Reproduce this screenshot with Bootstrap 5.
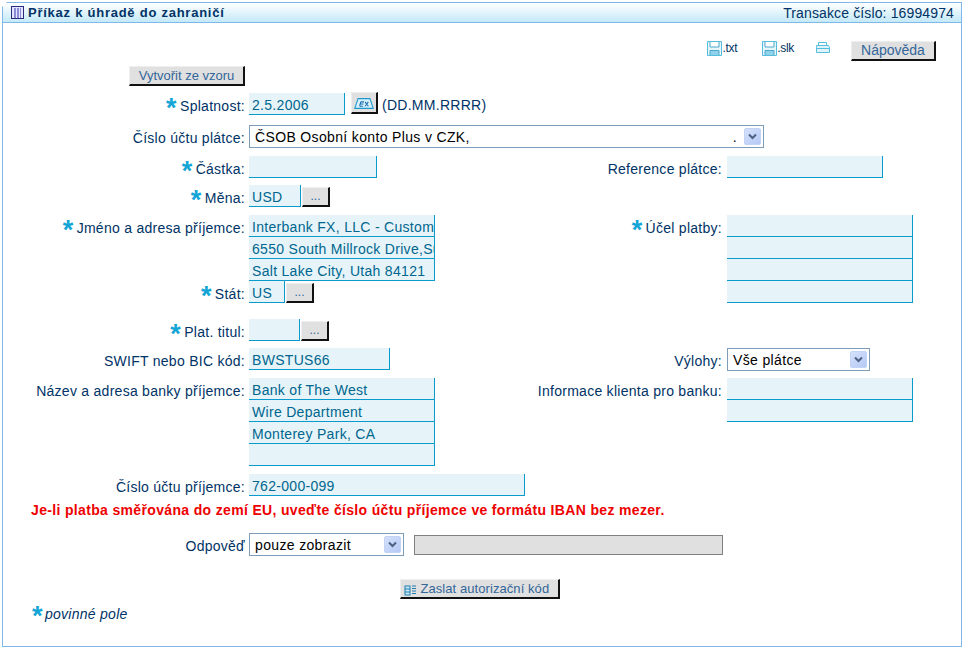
<!DOCTYPE html>
<html lang="cs">
<head>
<meta charset="utf-8">
<title>Příkaz k úhradě do zahraničí</title>
<link href="https://cdn.jsdelivr.net/npm/bootstrap@5.3.0/dist/css/bootstrap.min.css" rel="stylesheet">
<style>
html,body{height:100%;}
body{background:#fff;margin:0;font-family:"Liberation Sans",Arial,sans-serif;font-size:14px;letter-spacing:.27px;color:#003366;overflow:hidden;}
.panel-box{margin:2px 3px 0 2px;height:645px;border:1px solid #80b8ea;clip-path:polygon(5px 0,100% 0,100% 100%,0 100%,0 5px);}
.panel-head{height:20px;border-bottom:1px solid #80b8ea;background:linear-gradient(#ffffff,#c5e9f8);padding:0 7px 0 8px;line-height:18px;}
.panel-title{font-weight:700;font-size:13px;letter-spacing:.75px;color:#003366;}
.panel-num{font-size:14px;letter-spacing:.13px;}
.panel-main{padding-top:18px;}
.ln{display:flex;align-items:flex-start;}
.lab{width:242px;height:22px;flex:none;text-align:right;padding-top:4px;white-space:nowrap;box-sizing:border-box;line-height:19px;}
.fld{margin-left:4px;display:flex;flex:none;align-items:flex-start;}
.lft{width:527px;flex:none;display:flex;flex-direction:column;}
.lab-r{width:192px;height:22px;flex:none;text-align:right;line-height:19px;padding-top:4px;white-space:nowrap;}
.fld-r{margin-left:5px;display:flex;flex-direction:column;}
.star{color:#12a5d6;font-size:27px;font-weight:700;line-height:14px;vertical-align:-6px;font-family:"Liberation Sans",sans-serif;margin-right:-1px;}
input.inp{display:block;height:22px;padding:3px 0 0 3px;border:0;border-right:1px solid #0a9acb;border-bottom:1px solid #0a9acb;border-radius:0;background:#e6f4f9;color:#00668f;font:14px/18px "Liberation Sans",Arial,sans-serif;letter-spacing:.3px;box-shadow:none;}
.btn.gbtn{--bs-btn-padding-x:0;--bs-btn-padding-y:0;--bs-btn-border-radius:0;--bs-btn-bg:#e0e0e0;--bs-btn-hover-bg:#e0e0e0;--bs-btn-color:#336699;--bs-btn-hover-color:#336699;--bs-btn-font-size:14px;--bs-btn-line-height:17px;--bs-btn-border-width:0;background:#e0e0e0;color:#336699;border-right:2px solid #111;border-bottom:2px solid #111;border-top:1px solid #eee;border-left:1px solid #eee;height:20px;display:block;text-align:center;font-family:"Liberation Sans",Arial,sans-serif;}
.w-dots{width:28px;font-size:12px;margin-left:1px;margin-top:2px;}
.sel{display:block;height:23px;border:1px solid #7f9db9;border-radius:0;padding:1px 0 0 5px;font:14px/20px "Liberation Sans",Arial,sans-serif;letter-spacing:.35px;color:#000;appearance:none;-webkit-appearance:none;background:#fff url("data:image/svg+xml,%3Csvg xmlns='http://www.w3.org/2000/svg' width='17' height='17'%3E%3Cdefs%3E%3ClinearGradient id='g' x1='0' y1='0' x2='1' y2='1'%3E%3Cstop offset='0' stop-color='%23d6e2fb'/%3E%3Cstop offset='1' stop-color='%23b4c8f5'/%3E%3C/linearGradient%3E%3C/defs%3E%3Crect x='.5' y='.5' width='16' height='16' rx='1.5' fill='url(%23g)' stroke='%23c3d3f5'/%3E%3Cpath d='M5 6.5l3.5 3.5L12 6.5' fill='none' stroke='%234d6185' stroke-width='2'/%3E%3C/svg%3E") no-repeat right 2px center;}
.tools{height:21px;margin-top:0;display:flex;justify-content:flex-end;padding-right:25px;align-items:flex-start;}
.tool-a{display:flex;align-items:center;font-size:12px;color:#003366;text-decoration:none;height:14px;letter-spacing:-.3px;}
.warn{color:#ee0000;font-weight:700;font-size:14px;letter-spacing:.34px;padding-left:28px;line-height:16px;margin-top:6px;}
.note{padding-left:28px;font-style:italic;line-height:18px;margin-top:6px;}
.gray-in{width:309px;height:20px;background:#e0e0e0;border:1px solid #808080;margin:2px 0 0 10px;}
.m7{margin-top:7px}.m8{margin-top:8px}.m10{margin-top:10px}.m16{margin-top:16px}
.w96{width:96px}.w515{width:515px}.w128{width:128px}.w156{width:156px}.w52{width:52px}.w186{width:186px}.w36{width:36px}.w51{width:51px}.w141{width:141px}.w143{width:143px}.w276{width:276px}.w155{width:155px}
.t1{margin-right:25px}.t2{margin-right:21px}
.btn.btn-help{width:85px;margin-left:21px}
.btn.btn-tpl{width:116px;margin-left:126px;font-size:13px}
.tpl{margin-top:4px}
.btn.btn-cal{width:27px;margin-left:6px;height:22px;margin-top:-1px;padding:0}
.fmt{margin-left:4px;height:22px;line-height:25px}
.odp{margin-top:15px}
.auth{padding-left:397px;margin-top:23px}
.btn.btn-auth{width:160px;font-size:13px;letter-spacing:.07px;padding-right:6px}
</style>
</head>
<body>
<div class="panel-box">
  <div class="panel-head d-flex justify-content-between align-items-center">
    <div class="panel-title d-flex align-items-center gap-1">
      <svg width="13" height="13" viewBox="0 0 13 13"><rect x=".5" y=".5" width="12" height="12" fill="#e4e6ff" stroke="#2a2a80"/><path d="M3 3h7M3 5h7M3 7h7M3 9h7M3 11h7" stroke="#3333aa" stroke-width="1" stroke-dasharray="2 1" fill="none"/></svg>
      <span>Příkaz k úhradě do zahraničí</span>
    </div>
    <div class="panel-num">Transakce číslo: 16994974</div>
  </div>
  <div class="panel-main">
    <div class="tools">
      <a class="tool-a t1" href="#"><svg width="15" height="15" viewBox="0 0 15 15"><path d="M.5.5h14v14H.5z" fill="#e6f6fb" stroke="#55bedd"/><path d="M3 1v5h9V1" fill="#fff" stroke="#4aa9cc"/><path d="M3 14V9.500h9V14" fill="#8fd2ea" stroke="#4aa9cc"/></svg>.txt</a>
      <a class="tool-a t2" href="#"><svg width="15" height="15" viewBox="0 0 15 15"><path d="M.5.5h14v14H.5z" fill="#e6f6fb" stroke="#55bedd"/><path d="M3 1v5h9V1" fill="#fff" stroke="#4aa9cc"/><path d="M3 14V9.500h9V14" fill="#8fd2ea" stroke="#4aa9cc"/></svg>.slk</a>
      <a class="tool-a" href="#"><svg width="15" height="14" viewBox="0 0 15 14"><path d="M3.500 1.500h8v3h-8z" fill="#fff" stroke="#55bedd"/><path d="M1.500 4.500h12l1 2v5h-13v-5z" fill="#dff3fa" stroke="#55bedd"/><path d="M1 7.500h13" stroke="#55bedd"/></svg></a>
      <button type="button" class="btn gbtn btn-help">Nápověda</button>
    </div>
    <div class="ln tpl"><button type="button" class="btn gbtn btn-tpl">Vytvořit ze vzoru</button></div>

    <div class="ln m7">
      <div class="lab"><span class="star">*</span> Splatnost:</div>
      <div class="fld">
        <input class="inp w96" value="2.5.2006">
        <button type="button" class="btn gbtn btn-cal" aria-label="Kalendář"><svg width="22" height="13" viewBox="0 0 20 12"><path d="M4.500 1.500h11l3 9h-17z" fill="#d8f0fa" stroke="#1f9ad0"/><path d="M7 4.500h3M6.500 6.500h3M6 8.500h3M7 4.500l-1 4M11 4.500l3 4M14 4.500l-3 4" stroke="#1a70b0" fill="none"/></svg></button>
        <span class="fmt">(DD.MM.RRRR)</span>
      </div>
    </div>

    <div class="ln m10">
      <div class="lab">Číslo účtu plátce:</div>
      <div class="fld"><select class="sel w515"><option>ČSOB Osobní konto Plus v CZK,&nbsp;&nbsp;&nbsp;&nbsp;&nbsp;&nbsp;&nbsp;&nbsp;&nbsp;&nbsp;&nbsp;&nbsp;&nbsp;&nbsp;&nbsp;&nbsp;&nbsp;&nbsp;&nbsp;&nbsp;&nbsp;&nbsp;&nbsp;&nbsp;&nbsp;&nbsp;&nbsp;&nbsp;&nbsp;&nbsp;&nbsp;&nbsp;&nbsp;&nbsp;&nbsp;&nbsp;&nbsp;&nbsp;&nbsp;&nbsp;&nbsp;&nbsp;&nbsp;&nbsp;&nbsp;&nbsp;&nbsp;&nbsp;&nbsp;&nbsp;&nbsp;&nbsp;&nbsp;&nbsp;&nbsp;&nbsp;&nbsp;&nbsp;&nbsp;&nbsp;&nbsp;&nbsp;.</option></select></div>
    </div>

    <div class="ln m8">
      <div class="lft"><div class="ln"><div class="lab"><span class="star">*</span> Částka:</div><div class="fld"><input class="inp w128"></div></div></div>
      <div class="lab-r">Reference plátce:</div><div class="fld-r"><input class="inp w156"></div>
    </div>

    <div class="ln m7">
      <div class="lab"><span class="star">*</span> Měna:</div>
      <div class="fld"><input class="inp w52" value="USD"><button type="button" class="btn gbtn w-dots">...</button></div>
    </div>

    <div class="ln m8">
      <div class="lft">
        <div class="ln">
          <div class="lab"><span class="star">*</span> Jméno a adresa příjemce:</div>
          <div class="fld flex-column">
            <input class="inp w186" value="Interbank FX, LLC - Customer">
            <input class="inp w186" value="6550 South Millrock Drive,Suite 500">
            <input class="inp w186" value="Salt Lake City, Utah 84121">
          </div>
        </div>
        <div class="ln">
          <div class="lab"><span class="star">*</span> Stát:</div>
          <div class="fld"><input class="inp w36" value="US"><button type="button" class="btn gbtn w-dots">...</button></div>
        </div>
      </div>
      <div class="lab-r"><span class="star">*</span> Účel platby:</div>
      <div class="fld-r"><input class="inp w186"><input class="inp w186"><input class="inp w186"><input class="inp w186"></div>
    </div>

    <div class="ln m16">
      <div class="lab"><span class="star">*</span> Plat. titul:</div>
      <div class="fld"><input class="inp w51" ><button type="button" class="btn gbtn w-dots">...</button></div>
    </div>

    <div class="ln m7">
      <div class="lft"><div class="ln"><div class="lab">SWIFT nebo BIC kód:</div><div class="fld"><input class="inp w141" value="BWSTUS66"></div></div></div>
      <div class="lab-r">Výlohy:</div><div class="fld-r"><select class="sel w143"><option>Vše plátce</option></select></div>
    </div>

    <div class="ln m7">
      <div class="lft"><div class="ln">
        <div class="lab">Název a adresa banky příjemce:</div>
        <div class="fld flex-column">
          <input class="inp w186" value="Bank of The West">
          <input class="inp w186" value="Wire Department">
          <input class="inp w186" value="Monterey Park, CA">
          <input class="inp w186">
        </div>
      </div></div>
      <div class="lab-r">Informace klienta pro banku:</div>
      <div class="fld-r"><input class="inp w186"><input class="inp w186"></div>
    </div>

    <div class="ln m8">
      <div class="lab">Číslo účtu příjemce:</div>
      <div class="fld"><input class="inp w276" value="762-000-099"></div>
    </div>

    <div class="warn">Je-li platba směřována do zemí EU, uveďte číslo účtu příjemce ve formátu IBAN bez mezer.</div>

    <div class="ln odp">
      <div class="lab">Odpověď</div>
      <div class="fld"><select class="sel w155"><option>pouze zobrazit</option></select><div class="gray-in"></div></div>
    </div>

    <div class="d-flex auth"><button type="button" class="btn gbtn btn-auth"><svg width="13" height="12" viewBox="0 0 13 12"><rect x="1" y="2" width="5" height="9" fill="#cdeaf5" stroke="#1f7fb0"/><path d="M1 5h5M1 8h5M8 2h4M8 4.500h4M8 7h4M8 9.500h4" stroke="#1f7fb0" fill="none"/></svg> Zaslat autorizační kód</button></div>

    <div class="note"><span class="star">*</span> povinné pole</div>
  </div>
</div>
</body>
</html>
